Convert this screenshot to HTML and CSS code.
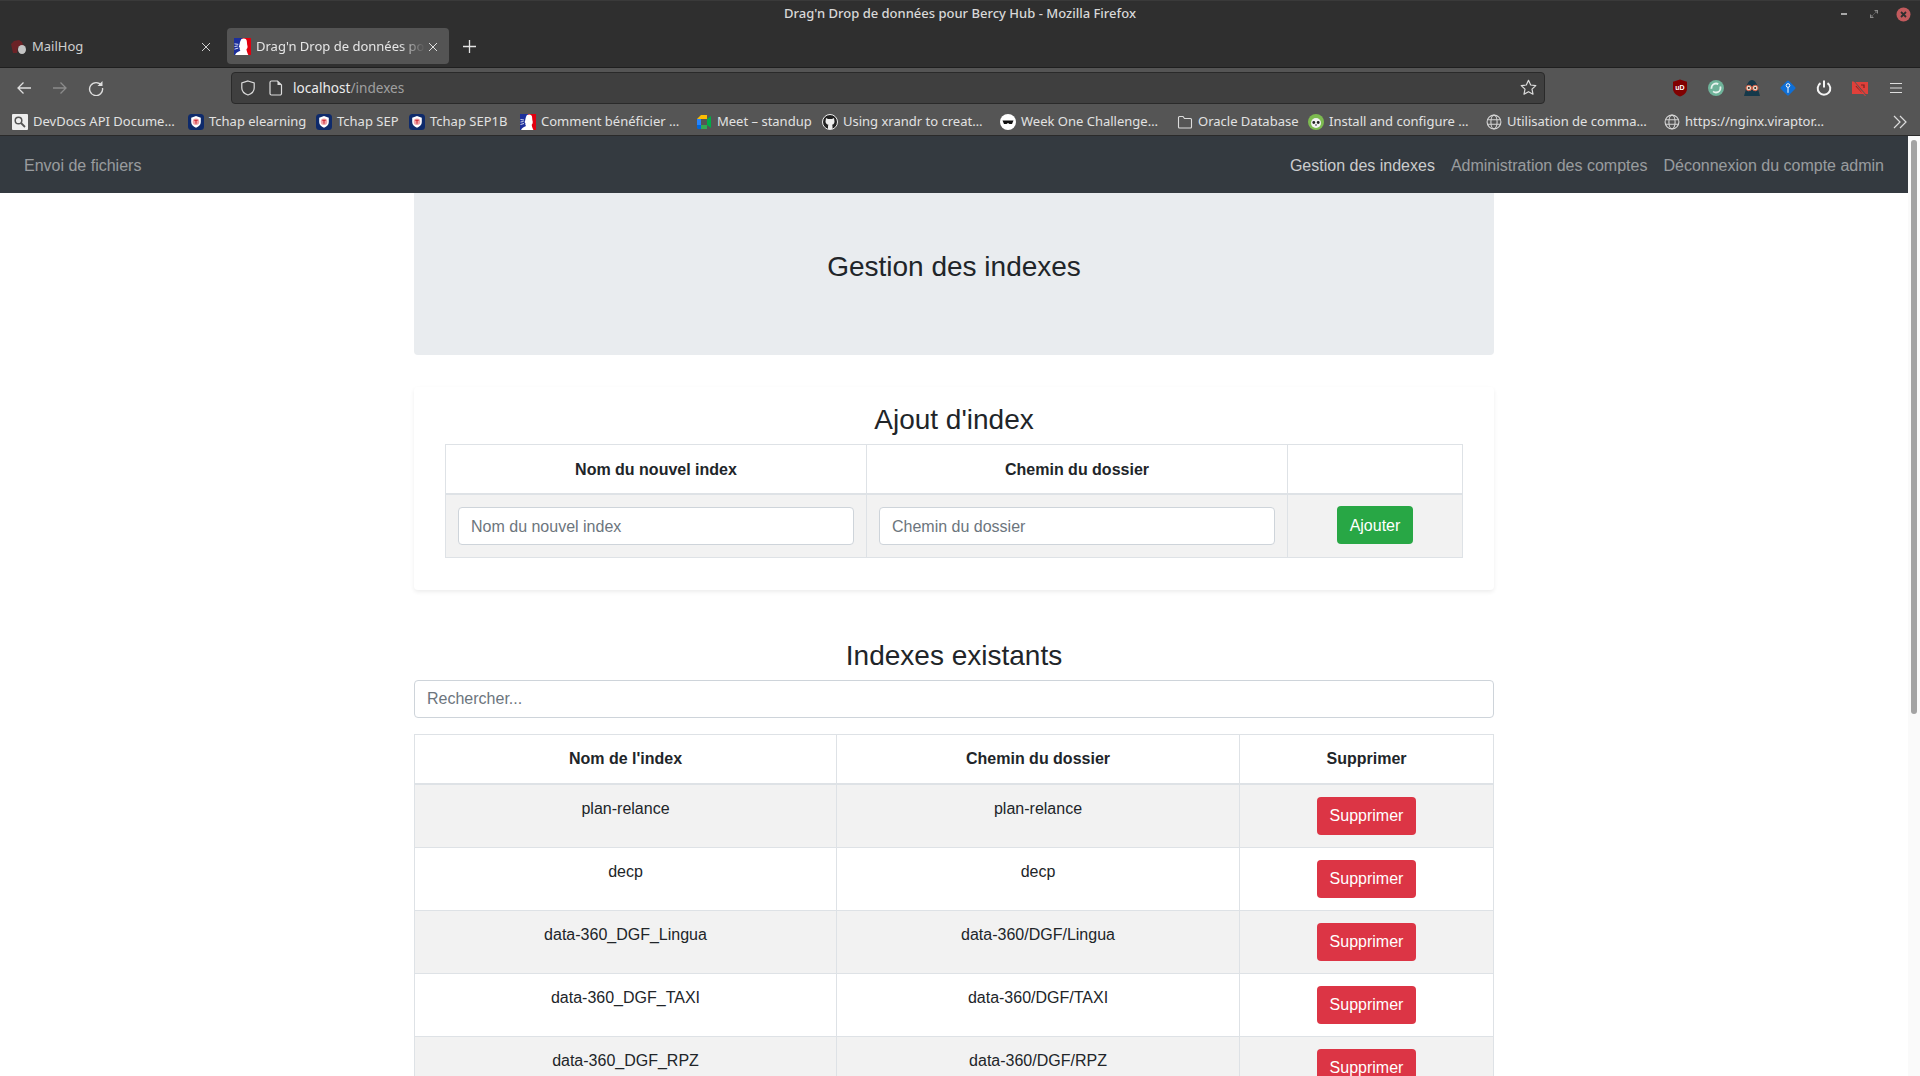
FILE: index.html
```html
<!DOCTYPE html>
<html lang="fr">
<head>
    <meta charset="UTF-8">
    <meta name="viewport" content="width=device-width, initial-scale=1.0">
    <title>Drag'n Drop de données pour Bercy Hub</title>
    <link rel="stylesheet" href="styles.css">
</head>
<body>
    <svg class="sprites" width="0" height="0" aria-hidden="true">
        <symbol id="marianne" viewBox="0 0 16 16">
            <rect x="0" y="0" width="8" height="16" fill="#1c2f9c"/>
            <rect x="8" y="0" width="8" height="16" fill="#e1000f"/>
            <path d="M1 16c1-2.500 3-3 5-4-.5-1-1-1.500-.5-2.500L4.500 8c1-1 .5-4 2.500-7 2.500-1.200 4.500-.5 5 1.500.3 2 .2 3.500.7 5 .2 1.500-.2 2.500-1 3.200.3 2 .8 3.300 1.800 5.300z" fill="#fff"/>
            <path d="M.5 5.500l3.500.5M.5 8l3-.5M.5 10.500l3.500-1" stroke="#fff" stroke-width=".8" fill="none"/>
        </symbol>
        <symbol id="tchap" viewBox="0 0 16 16">
            <rect width="16" height="16" rx="3.500" fill="#0e2a6b"/>
            <path d="M8 2l4.800 1.800v4.200c0 3-2.100 4.700-4.800 5.800-2.700-1.100-4.800-2.800-4.800-5.800V3.800z" fill="#fff"/>
            <circle cx="8" cy="7.800" r="3.300" fill="#f2a3a8"/>
            <path d="M6.300 6.300h3.400M8 6.300v3.400" stroke="#c9202c" stroke-width="1" fill="none"/>
        </symbol>
        <symbol id="globe" viewBox="0 0 16 16">
            <g fill="none" stroke="#d4d4d4" stroke-width="1.100">
                <circle cx="8" cy="8" r="6.900"/>
                <ellipse cx="8" cy="8" rx="3.100" ry="6.900"/>
                <path d="M1.300 5.700h13.400M1.300 10.300h13.400"/>
            </g>
        </symbol>
    </svg>

    <div class="titlebar">
        <span></span>
        <span class="window-title">Drag'n Drop de données pour Bercy Hub - Mozilla Firefox</span>
        <div class="window-controls">
            <span class="win-min"></span>
            <svg class="win-max" width="8" height="8" viewBox="0 0 8 8"><path d="M4 0h4v4zM0 4l4 4H0z" fill="#8a8a8a"/><path d="M1 7l6-6" stroke="#555"/></svg>
            <svg class="win-close" width="15" height="15" viewBox="0 0 15 15"><circle cx="7.500" cy="7.500" r="7" fill="#c25a5d"/><path d="M5 5l5 5M10 5l-5 5" stroke="#2f2f2f" stroke-width="1.800"/></svg>
        </div>
    </div>

    <div class="tabstrip">
        <div class="tab">
            <svg class="fav" width="16" height="16" viewBox="0 0 16 16"><path d="M0 5l3-3 5-1 3 2 1 3 2 1-3 1H7L6 14H2z" fill="#6b2226"/><ellipse cx="11" cy="10.500" rx="4" ry="4.500" fill="#c4c4c4"/></svg>
            <span class="tab-label">MailHog</span>
            <svg class="tab-close" width="10" height="10" viewBox="0 0 10 10"><path d="M1 1l8 8M9 1l-8 8" stroke="#d0d0d0" stroke-width="1"/></svg>
        </div>
        <div class="tab tab-active">
            <svg class="fav" width="17" height="17"><use href="#marianne"/></svg>
            <span class="tab-label">Drag'n Drop de données pour Bercy Hub</span>
            <svg class="tab-close" width="10" height="10" viewBox="0 0 10 10"><path d="M1 1l8 8M9 1l-8 8" stroke="#e0e0e0" stroke-width="1"/></svg>
        </div>
        <svg class="tab-new" width="13" height="13" viewBox="0 0 13 13"><path d="M6.500 0v13M0 6.500h13" stroke="#e4e4e4" stroke-width="1.300"/></svg>
    </div>

    <div class="toolbar">
        <div class="tool-btn">
            <svg width="16" height="16" viewBox="0 0 16 16"><path d="M15 8H2M7.500 2.500L2 8l5.500 5.500" fill="none" stroke="#dedede" stroke-width="1.300"/></svg>
        </div>
        <div class="tool-btn">
            <svg width="16" height="16" viewBox="0 0 16 16"><path d="M1 8h13M8.500 2.500L14 8l-5.500 5.500" fill="none" stroke="#8b8b8b" stroke-width="1.300"/></svg>
        </div>
        <div class="tool-btn">
            <svg width="16" height="16" viewBox="0 0 16 16"><path d="M13.500 5.500A6.500 6.500 0 1 0 14.500 8" fill="none" stroke="#dedede" stroke-width="1.400"/><path d="M14.500 1v5h-5z" fill="#dedede"/></svg>
        </div>
        <div class="urlbar">
            <svg class="url-shield" width="16" height="16" viewBox="0 0 16 16"><path d="M8 1l6.200 2v5c0 3.600-2.700 5.800-6.200 7-3.500-1.200-6.200-3.400-6.200-7V3z" fill="none" stroke="#dcdcdc" stroke-width="1.200"/></svg>
            <svg class="url-page" width="14" height="16" viewBox="0 0 14 16"><path d="M2.500 1h6l4 4v8.500a1.500 1.500 0 0 1-1.500 1.500H2.500A1.500 1.500 0 0 1 1 13.500v-11A1.500 1.500 0 0 1 2.500 1z" fill="none" stroke="#dcdcdc" stroke-width="1.200"/><path d="M8.500 1v4h4" fill="#dcdcdc"/></svg>
            <span class="url-text">localhost<span class="url-path">/indexes</span></span>
            <svg class="url-star" width="17" height="17" viewBox="0 0 17 17"><path d="M8.500 1.300l2.200 4.700 5.100.6-3.800 3.500 1 5.100-4.500-2.500-4.500 2.500 1-5.100L1.200 6.600 6.300 6z" fill="none" stroke="#dcdcdc" stroke-width="1.200" stroke-linejoin="round"/></svg>
        </div>
        <div class="tool-btn">
            <svg width="16" height="18" viewBox="0 0 16 18"><path d="M8 .5l7 2.200v7c0 3.700-3 6.300-7 7.800-4-1.500-7-4.100-7-7.800v-7z" fill="#800000"/><text x="8" y="11" class="ublock-text">uD</text></svg>
        </div>
        <div class="tool-btn">
            <svg width="16" height="16" viewBox="0 0 16 16"><circle cx="8" cy="8" r="8" fill="#6fb39a"/><circle cx="8" cy="8" r="4.500" fill="none" stroke="#e8f3ef" stroke-width="1.800" stroke-dasharray="10 3"/><circle cx="8" cy="8" r="2" fill="#6fb39a"/></svg>
        </div>
        <div class="tool-btn">
            <svg width="16" height="16" viewBox="0 0 16 16"><path d="M0 16l2-7c.5-5 3-9 6-9s5.500 4 6 9l2 7z" fill="#16394a"/><circle cx="4.800" cy="8" r="2.800" fill="#e8d8c8" stroke="#d0583f"/><circle cx="11.200" cy="8" r="2.800" fill="#e8d8c8" stroke="#d0583f"/><circle cx="4.800" cy="8" r="1" fill="#222"/><circle cx="11.200" cy="8" r="1" fill="#222"/></svg>
        </div>
        <div class="tool-btn">
            <svg width="16" height="16" viewBox="0 0 16 16"><rect x="2.300" y="2.300" width="11.400" height="11.400" rx="1.500" transform="rotate(45 8 8)" fill="#0f6fd6"/><circle cx="8" cy="5.500" r="1.800" fill="none" stroke="#fff" stroke-width="1"/><path d="M8 7.300v5.500" stroke="#fff" stroke-width="1"/></svg>
        </div>
        <div class="tool-btn">
            <svg width="16" height="16" viewBox="0 0 16 16"><path d="M4.500 3.200a6.300 6.300 0 1 0 7 0" fill="none" stroke="#f4f4f4" stroke-width="2"/><path d="M8 .5v7" stroke="#f4f4f4" stroke-width="2"/></svg>
        </div>
        <div class="tool-btn">
            <svg width="16" height="16" viewBox="0 0 16 16"><rect y="2" width="16" height="12" fill="#e0403a"/><path d="M4 6l6 6M9 5h3v3" fill="none" stroke="#7a2320" stroke-width="1.200"/><path d="M1.500 .5l13 15" stroke="#555" stroke-width="1"/><path d="M.5 1l13 15" stroke="#e0403a" stroke-width="1"/></svg>
        </div>
        <div class="tool-btn">
            <svg width="14" height="12" viewBox="0 0 14 12"><path d="M1 1.500h12M1 6h12M1 10.500h12" stroke="#dedede" stroke-width="1.200"/></svg>
        </div>
    </div>

    <div class="bookmarks">
        <div class="bm">
            <svg width="16" height="16" viewBox="0 0 16 16"><rect width="16" height="16" rx="1" fill="#eee"/><circle cx="6.500" cy="6.500" r="3.300" fill="none" stroke="#555" stroke-width="1.500"/><path d="M9 9l4 4" stroke="#555" stroke-width="1.800"/></svg>
            <span>DevDocs API Docume…</span>
        </div>
        <div class="bm"><svg width="16" height="16"><use href="#tchap"/></svg><span>Tchap elearning</span></div>
        <div class="bm"><svg width="16" height="16"><use href="#tchap"/></svg><span>Tchap SEP</span></div>
        <div class="bm"><svg width="16" height="16"><use href="#tchap"/></svg><span>Tchap SEP1B</span></div>
        <div class="bm"><svg width="16" height="16"><use href="#marianne"/></svg><span>Comment bénéficier …</span></div>
        <div class="bm">
            <svg width="16" height="16" viewBox="0 0 16 16"><path d="M1 5l4-4h6v4z" fill="#fbbc04"/><path d="M1 5h4v6H1z" fill="#2684fc"/><path d="M1 11h4v4H2.500A1.500 1.500 0 0 1 1 13.500z" fill="#0066da"/><path d="M5 11h6v4H5z" fill="#34a853"/><path d="M11 5v6l4 3V2z" fill="#00ac47"/><path d="M5 5h6v6H5z" fill="#555"/></svg>
            <span>Meet – standup</span>
        </div>
        <div class="bm">
            <svg width="16" height="16" viewBox="0 0 16 16"><circle cx="8" cy="8" r="7.500" fill="#222" stroke="#eee"/><path d="M4 4l2 1h4l2-1 .5 3.500c0 2-1 3-2.500 3.300.4.400.5 1 .5 2V15H6v-2.200c0-1 .1-1.600.5-2C5 10.500 3.500 9.500 3.500 7.500z" fill="#eee"/></svg>
            <span>Using xrandr to creat…</span>
        </div>
        <div class="bm">
            <svg width="16" height="16" viewBox="0 0 16 16"><circle cx="8" cy="8" r="8" fill="#fff"/><path d="M2.500 6.500h11L12 10H9.500L8 9 6.500 10H4z" fill="#111"/></svg>
            <span>Week One Challenge…</span>
        </div>
        <div class="bm">
            <svg width="16" height="16" viewBox="0 0 16 16"><path d="M1.500 13V3.500A1 1 0 0 1 2.500 2.500H6l1.500 2h6a1 1 0 0 1 1 1V13a1 1 0 0 1-1 1h-11a1 1 0 0 1-1-1z" fill="none" stroke="#dcdcdc" stroke-width="1.100"/></svg>
            <span>Oracle Database</span>
        </div>
        <div class="bm">
            <svg width="16" height="16" viewBox="0 0 16 16"><circle cx="8" cy="8" r="8" fill="#7dbb50"/><circle cx="8" cy="9" r="5" fill="#f2f2f2"/><circle cx="5.800" cy="8.500" r="1.400" fill="#222"/><circle cx="10.200" cy="8.500" r="1.400" fill="#222"/><circle cx="8" cy="11" r=".8" fill="#222"/></svg>
            <span>Install and configure …</span>
        </div>
        <div class="bm"><svg width="16" height="16"><use href="#globe"/></svg><span>Utilisation de comma…</span></div>
        <div class="bm"><svg width="16" height="16"><use href="#globe"/></svg><span>https://nginx.viraptor…</span></div>
        <svg class="bm-more" width="14" height="14" viewBox="0 0 14 14"><path d="M1 1l6 6-6 6M7 1l6 6-6 6" fill="none" stroke="#dcdcdc" stroke-width="1.200"/></svg>
    </div>

    <div class="viewport">
        <div class="page">
            <nav class="navbar">
                <a class="nav-link" href="#">Envoi de fichiers</a>
                <div class="nav-right">
                    <a class="nav-link active" href="#">Gestion des indexes</a>
                    <a class="nav-link" href="#">Administration des comptes</a>
                    <a class="nav-link" href="#">Déconnexion du compte admin</a>
                </div>
            </nav>

            <main class="container">
                <div class="jumbotron">
                    <h3>Gestion des indexes</h3>
                </div>

                <section class="card">
                    <h3>Ajout d'index</h3>
                    <table class="table">
                        <colgroup>
                            <col class="add-name"><col class="add-path"><col>
                        </colgroup>
                        <thead>
                            <tr>
                                <th>Nom du nouvel index</th>
                                <th>Chemin du dossier</th>
                                <th></th>
                            </tr>
                        </thead>
                        <tbody>
                            <tr>
                                <td><input class="form-control" type="text" placeholder="Nom du nouvel index"></td>
                                <td><input class="form-control" type="text" placeholder="Chemin du dossier"></td>
                                <td><button class="btn btn-success">Ajouter</button></td>
                            </tr>
                        </tbody>
                    </table>
                </section>

                <h3 class="list-title">Indexes existants</h3>
                <input class="form-control search" type="text" placeholder="Rechercher...">

                <table class="table">
                    <colgroup>
                        <col class="list-name"><col class="list-path"><col>
                    </colgroup>
                    <thead>
                        <tr>
                            <th>Nom de l'index</th>
                            <th>Chemin du dossier</th>
                            <th>Supprimer</th>
                        </tr>
                    </thead>
                    <tbody>
                        <tr>
                            <td>plan-relance</td>
                            <td>plan-relance</td>
                            <td><button class="btn btn-danger">Supprimer</button></td>
                        </tr>
                        <tr>
                            <td>decp</td>
                            <td>decp</td>
                            <td><button class="btn btn-danger">Supprimer</button></td>
                        </tr>
                        <tr>
                            <td>data-360_DGF_Lingua</td>
                            <td>data-360/DGF/Lingua</td>
                            <td><button class="btn btn-danger">Supprimer</button></td>
                        </tr>
                        <tr>
                            <td>data-360_DGF_TAXI</td>
                            <td>data-360/DGF/TAXI</td>
                            <td><button class="btn btn-danger">Supprimer</button></td>
                        </tr>
                        <tr>
                            <td>data-360_DGF_RPZ</td>
                            <td>data-360/DGF/RPZ</td>
                            <td><button class="btn btn-danger">Supprimer</button></td>
                        </tr>
                    </tbody>
                </table>
            </main>
        </div>
        <div class="scrollbar"><div class="scroll-thumb"></div></div>
    </div>
</body>
</html>
```

FILE: styles.css
```css
* {
    box-sizing: border-box;
}
html, body {
    margin: 0;
    height: 100%;
    overflow: hidden;
}
body {
    display: flex;
    flex-direction: column;
    font-family: "Liberation Sans", Arial, sans-serif;
    font-size: 16px;
    line-height: 1.5;
    color: #212529;
    background: #fff;
}
.sprites {
    display: block;
    height: 0;
}

/* browser chrome */
.titlebar, .tabstrip, .toolbar, .bookmarks {
    font-family: "Noto Sans", sans-serif;
    flex: none;
}
.titlebar {
    display: grid;
    grid-template-columns: 1fr auto 1fr;
    align-items: center;
    height: 28px;
    padding-bottom: 1px;
    background: #2f2f2f;
    border-top: 1px solid #3a3a3a;
}
.window-title {
    font-size: 13px;
    font-weight: 500;
    color: #d8d8d8;
}
.window-controls {
    display: flex;
    justify-content: flex-end;
    align-items: center;
    gap: 18px;
    padding-right: 9px;
}
.win-min {
    width: 6px;
    height: 2px;
    margin-right: 5px;
    background: #a8a8a8;
}
.tabstrip {
    display: flex;
    align-items: flex-start;
    height: 40px;
    background: #2f2f2f;
    border-bottom: 1px solid #1f1f1f;
}
.tab {
    display: flex;
    align-items: center;
    width: 222px;
    height: 36px;
    margin-right: 5px;
    padding: 1px 11px 0;
    border-radius: 4px;
    font-size: 13px;
    color: #cfcfcf;
}
.tab-active {
    background: #545454;
    color: #e6e6e6;
    padding-left: 7px;
}
.fav {
    flex: none;
    margin-right: 5px;
}
.tab-label {
    flex: 1;
    min-width: 0;
    white-space: nowrap;
    overflow: hidden;
}
.tab-active .tab-label {
    -webkit-mask-image: linear-gradient(to right, #000 85%, transparent);
    mask-image: linear-gradient(to right, #000 85%, transparent);
}
.tab-close {
    flex: none;
    margin-left: 3px;
}
.tab-new {
    align-self: center;
    margin: 0 0 2px 9px;
}
.toolbar {
    display: flex;
    align-items: center;
    height: 36px;
    padding: 3px 6px 0;
    background: #555;
}
.tool-btn {
    display: flex;
    align-items: center;
    justify-content: center;
    flex: none;
    width: 36px;
}
.urlbar {
    display: flex;
    align-items: center;
    flex: 1;
    height: 32px;
    margin: 0 117px;
    padding: 0 7px 0 8px;
    background: #3f3f3f;
    border: 1px solid #2a2a2a;
    border-radius: 4px;
    font-size: 13.6px;
    color: #ececec;
}
.url-page {
    margin-left: 13px;
}
.url-text {
    flex: 1;
    margin-left: 10px;
    padding-top: 1px;
}
.url-path {
    color: #a0a0a0;
}
.ublock-text {
    font-family: "Liberation Sans", sans-serif;
    font-size: 7px;
    font-weight: bold;
    text-anchor: middle;
    fill: #fff;
}
.bookmarks {
    display: grid;
    grid-template-columns: 176px 128px 93px 111px 176px 126px 178px 177px 131px 178px 178px 1fr auto;
    align-items: center;
    height: 32px;
    padding: 4px 12px 0;
    background: #555;
    border-bottom: 1px solid #2a2a2a;
    font-size: 13px;
    color: #e2e2e2;
}
.bm {
    display: flex;
    align-items: center;
    gap: 5px;
    white-space: nowrap;
}
.bm svg {
    flex: none;
}
.bm-more {
    margin-right: 1px;
}

/* page */
.viewport {
    display: flex;
    flex: 1;
    min-height: 0;
}
.page {
    flex: 1;
    min-width: 0;
    overflow: hidden;
}
.scrollbar {
    flex: none;
    width: 12px;
    padding: 4px 3px 0;
    background: #fafafa;
}
.scroll-thumb {
    height: 574px;
    background: #a3a3a3;
    border-radius: 3px;
}
.navbar {
    display: flex;
    justify-content: space-between;
    align-items: center;
    height: 57px;
    padding: 2px 24px 0;
    background: #343a40;
}
.nav-right {
    display: flex;
    gap: 16px;
}
.nav-link {
    color: rgba(255, 255, 255, 0.5);
    text-decoration: none;
}
.nav-link.active {
    color: rgba(255, 255, 255, 0.75);
}
.container {
    width: 1080px;
    margin: 0 auto;
}
h3 {
    margin: 0 0 7.85px;
    font-size: 28px;
    font-weight: 500;
    line-height: 1.2;
    text-align: center;
}
.jumbotron {
    height: 162px;
    padding-top: 57px;
    background: #e9ecef;
    border-radius: 0 0 4px 4px;
}
.card {
    height: 203px;
    margin-top: 32px;
    padding: 16px 31px 0;
    border-radius: 4px;
    box-shadow: 0 2px 4px rgba(0, 0, 0, 0.075);
}
.list-title {
    margin: 49px 0 7.4px;
}
.search {
    display: block;
    margin-bottom: 16px;
}
.table {
    width: 100%;
    table-layout: fixed;
    border-collapse: collapse;
}
.table th, .table td {
    padding: 12px;
    border: 1px solid #dee2e6;
    text-align: center;
    vertical-align: top;
}
.table th {
    font-weight: bold;
    border-bottom-width: 2px;
}
.table tbody tr:nth-child(odd) {
    background: #f2f2f2;
}
.card .table th {
    padding: 13px 12px 11px;
}
.card .form-control {
    padding: 7px 12px 5px;
}
.add-name, .add-path {
    width: 421px;
}
.list-name {
    width: 422px;
}
.list-path {
    width: 403px;
}
.form-control {
    width: 100%;
    height: 38px;
    padding: 6px 12px;
    font-family: inherit;
    font-size: 16px;
    color: #495057;
    background: #fff;
    border: 1px solid #ced4da;
    border-radius: 4px;
}
.form-control::placeholder {
    color: #6c757d;
    opacity: 1;
}
.btn {
    height: 38px;
    padding: 6px 12px;
    font-family: inherit;
    font-size: 16px;
    line-height: 1.5;
    color: #fff;
    border: 1px solid transparent;
    border-radius: 4px;
}
.btn-success {
    margin-top: -1px;
    padding: 7px 12px 5px;
    vertical-align: top;
    background: #28a745;
}
.btn-danger {
    background: #dc3545;
}
```
